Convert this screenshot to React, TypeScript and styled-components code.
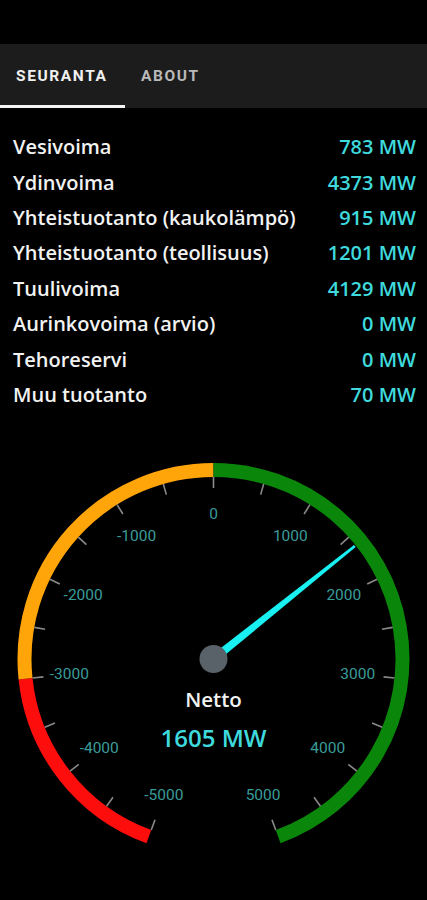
import React from "react";
import styled, { createGlobalStyle } from "styled-components";

const GlobalStyle = createGlobalStyle`
  html, body {
    margin: 0;
    padding: 0;
    background: #000;
  }
  body {
    font-family: "Open Sans", "Noto Sans", sans-serif;
    color: #fff;
  }
`;

const Screen = styled.div`
  width: 427px;
  min-height: 900px;
  background: #000;
  display: flex;
  flex-direction: column;
`;

const StatusSpace = styled.div`
  height: 44px;
  background: #000;
`;

const TabBar = styled.nav`
  height: 64px;
  background: #1c1c1c;
  display: flex;
  align-items: stretch;
`;

const Tab = styled.div<{ $active?: boolean }>`
  display: flex;
  align-items: center;
  padding: 3px 14px 0 16px;
  font-family: Roboto, "Liberation Sans", sans-serif;
  font-weight: 700;
  font-size: 15.5px;
  letter-spacing: 1.6px;
  color: ${(p) => (p.$active ? "#f0f0f0" : "#b9b9b9")};
  box-sizing: border-box;
  width: ${(p) => (p.$active ? "125px" : "auto")};
  border-bottom: 3px solid ${(p) => (p.$active ? "#f4f4f4" : "transparent")};
`;

const List = styled.div`
  display: flex;
  flex-direction: column;
  padding: 21px 11px 0 13px;
`;

const Row = styled.div`
  display: flex;
  justify-content: space-between;
  align-items: center;
  height: 35.4px;
  font-size: 20px;
  font-weight: 600;
`;

const Label = styled.span`
  color: #f2f2f2;
`;

const Value = styled.span`
  color: #3fdadd;
`;

const GaugeWrap = styled.div`
  margin-top: 42px;
  display: flex;
  justify-content: center;
`;

const rows: [string, number][] = [
  ["Vesivoima", 783],
  ["Ydinvoima", 4373],
  ["Yhteistuotanto (kaukolämpö)", 915],
  ["Yhteistuotanto (teollisuus)", 1201],
  ["Tuulivoima", 4129],
  ["Aurinkovoima (arvio)", 0],
  ["Tehoreservi", 0],
  ["Muu tuotanto", 70],
];

const CX = 213.5;
const CY = 205;
const DEG_PER_MW = 0.032;

const pt = (deg: number, r: number) => {
  const a = (deg * Math.PI) / 180;
  return [CX + r * Math.sin(a), CY - r * Math.cos(a)];
};

const arc = (from: number, to: number, r: number) => {
  const [x1, y1] = pt(from, r);
  const [x2, y2] = pt(to, r);
  const large = to - from > 180 ? 1 : 0;
  return `M ${x1} ${y1} A ${r} ${r} 0 ${large} 1 ${x2} ${y2}`;
};

const Gauge: React.FC<{ value: number }> = ({ value }) => {
  const ticks = [];
  for (let v = -5000; v <= 5000; v += 500) {
    const d = v * DEG_PER_MW;
    const [x1, y1] = pt(d, 171);
    const [x2, y2] = pt(d, 182);
    ticks.push(<line key={v} x1={x1} y1={y1} x2={x2} y2={y2} stroke="#8a8a8a" strokeWidth={1.6} />);
  }
  const labels = [];
  for (let v = -5000; v <= 5000; v += 1000) {
    const [x, y] = pt(v * DEG_PER_MW, 145);
    labels.push(
      <text
        key={v}
        x={x}
        y={y}
        textAnchor="middle"
        dominantBaseline="central"
        fill="#3a9c9a"
        fontFamily="Roboto, 'Liberation Sans', sans-serif"
        fontSize={15.5}
      >
        {v}
      </text>
    );
  }
  const nd = value * DEG_PER_MW;
  const [tx, ty] = pt(nd, 181);
  const a = (nd * Math.PI) / 180;
  const px = Math.cos(a);
  const py = Math.sin(a);
  const bw = 4.2;
  const tw = 1.4;
  const needle = [
    [CX + px * bw, CY + py * bw],
    [tx + px * tw, ty + py * tw],
    [tx - px * tw, ty - py * tw],
    [CX - px * bw, CY - py * bw],
  ]
    .map((p) => p.join(","))
    .join(" ");

  return (
    <svg width={427} height={400} viewBox="0 0 427 400">
      <path d={arc(-160, -96, 189)} stroke="#fe0d0d" strokeWidth={14} fill="none" />
      <path d={arc(-96, 0, 189)} stroke="#ffa50a" strokeWidth={14} fill="none" />
      <path d={arc(0, 160, 189)} stroke="#0a860a" strokeWidth={14} fill="none" />
      {ticks}
      {labels}
      <polygon points={needle} fill="#19f0f2" />
      <circle cx={CX} cy={CY} r={14} fill="#596169" />
      <text
        x={CX}
        y={CY + 40}
        textAnchor="middle"
        dominantBaseline="central"
        fill="#f2f2f2"
        fontFamily="'Open Sans', sans-serif"
        fontWeight={600}
        fontSize={20.5}
      >
        Netto
      </text>
      <text
        x={CX}
        y={CY + 78}
        textAnchor="middle"
        dominantBaseline="central"
        fill="#3fdadd"
        fontFamily="'Open Sans', sans-serif"
        fontWeight={600}
        fontSize={24}
      >
        {value} MW
      </text>
    </svg>
  );
};

export default function App() {
  return (
    <>
      <GlobalStyle />
      <Screen>
        <StatusSpace />
        <TabBar>
          <Tab $active>SEURANTA</Tab>
          <Tab>ABOUT</Tab>
        </TabBar>
        <List>
          {rows.map(([name, mw]) => (
            <Row key={name}>
              <Label>{name}</Label>
              <Value>{mw} MW</Value>
            </Row>
          ))}
        </List>
        <GaugeWrap>
          <Gauge value={1605} />
        </GaugeWrap>
      </Screen>
    </>
  );
}
